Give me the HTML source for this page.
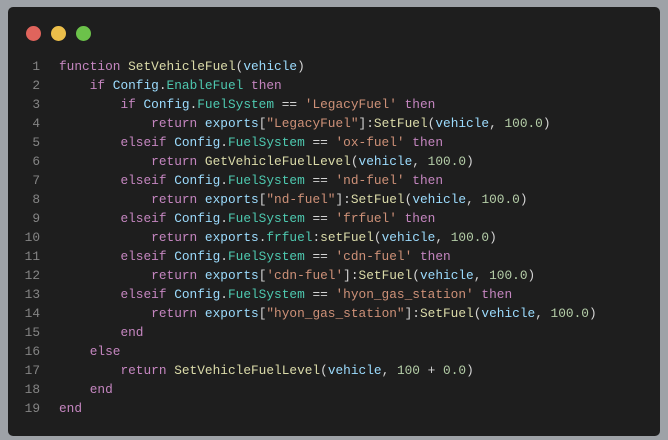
<!DOCTYPE html>
<html><head><meta charset="utf-8"><style>
html,body{margin:0;padding:0;width:668px;height:440px;background:#9ea2a7;overflow:hidden}
.card{position:absolute;left:8px;top:7px;width:652px;height:429px;background:#1e1e1e;border-radius:5px}
.dot{position:absolute;top:19px;width:15px;height:15px;border-radius:50%}
pre{position:absolute;left:0;top:50px;margin:0;font-family:"Liberation Mono",monospace;font-size:12.8px;line-height:19px;color:#d4d4d4}
.n{display:inline-block;width:32px;text-align:right;color:#858585;margin-right:19px}
.k{color:#c586c0}.f{color:#dcdcaa}.v{color:#9cdcfe}.g{color:#4ec9b0}.s{color:#ce9178}.d{color:#b5cea8}
</style></head><body><div class="card">
<div class="dot" style="left:18px;background:#e0645c"></div>
<div class="dot" style="left:43px;background:#ecbf4a"></div>
<div class="dot" style="left:68px;background:#6cc24a"></div>
<pre><span class="n">1</span><span class="k">function</span> <span class="f">SetVehicleFuel</span>(<span class="v">vehicle</span>)
<span class="n">2</span>    <span class="k">if</span> <span class="v">Config</span>.<span class="g">EnableFuel</span> <span class="k">then</span>
<span class="n">3</span>        <span class="k">if</span> <span class="v">Config</span>.<span class="g">FuelSystem</span> == <span class="s">'LegacyFuel'</span> <span class="k">then</span>
<span class="n">4</span>            <span class="k">return</span> <span class="v">exports</span>[<span class="s">"LegacyFuel"</span>]:<span class="f">SetFuel</span>(<span class="v">vehicle</span>, <span class="d">100.0</span>)
<span class="n">5</span>        <span class="k">elseif</span> <span class="v">Config</span>.<span class="g">FuelSystem</span> == <span class="s">'ox-fuel'</span> <span class="k">then</span>
<span class="n">6</span>            <span class="k">return</span> <span class="f">GetVehicleFuelLevel</span>(<span class="v">vehicle</span>, <span class="d">100.0</span>)
<span class="n">7</span>        <span class="k">elseif</span> <span class="v">Config</span>.<span class="g">FuelSystem</span> == <span class="s">'nd-fuel'</span> <span class="k">then</span>
<span class="n">8</span>            <span class="k">return</span> <span class="v">exports</span>[<span class="s">"nd-fuel"</span>]:<span class="f">SetFuel</span>(<span class="v">vehicle</span>, <span class="d">100.0</span>)
<span class="n">9</span>        <span class="k">elseif</span> <span class="v">Config</span>.<span class="g">FuelSystem</span> == <span class="s">'frfuel'</span> <span class="k">then</span>
<span class="n">10</span>            <span class="k">return</span> <span class="v">exports</span>.<span class="g">frfuel</span>:<span class="f">setFuel</span>(<span class="v">vehicle</span>, <span class="d">100.0</span>)
<span class="n">11</span>        <span class="k">elseif</span> <span class="v">Config</span>.<span class="g">FuelSystem</span> == <span class="s">'cdn-fuel'</span> <span class="k">then</span>
<span class="n">12</span>            <span class="k">return</span> <span class="v">exports</span>[<span class="s">'cdn-fuel'</span>]:<span class="f">SetFuel</span>(<span class="v">vehicle</span>, <span class="d">100.0</span>)
<span class="n">13</span>        <span class="k">elseif</span> <span class="v">Config</span>.<span class="g">FuelSystem</span> == <span class="s">'hyon_gas_station'</span> <span class="k">then</span>
<span class="n">14</span>            <span class="k">return</span> <span class="v">exports</span>[<span class="s">"hyon_gas_station"</span>]:<span class="f">SetFuel</span>(<span class="v">vehicle</span>, <span class="d">100.0</span>)
<span class="n">15</span>        <span class="k">end</span>
<span class="n">16</span>    <span class="k">else</span>
<span class="n">17</span>        <span class="k">return</span> <span class="f">SetVehicleFuelLevel</span>(<span class="v">vehicle</span>, <span class="d">100</span> + <span class="d">0.0</span>)
<span class="n">18</span>    <span class="k">end</span>
<span class="n">19</span><span class="k">end</span></pre>
</div></body></html>
